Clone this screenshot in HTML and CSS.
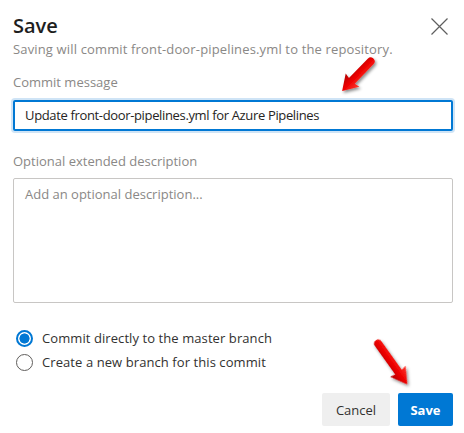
FILE: index.html
```html
<!DOCTYPE html>
<html>
<head>
<meta charset="utf-8">
<link rel="stylesheet" href="styles.css">
</head>
<body>
<div class="dialog">
  <div class="header">
    <div class="titles">
      <div class="title">Save</div>
      <div class="subtitle">Saving will commit front-door-pipelines.yml to the repository.</div>
    </div>
    <button class="close" aria-label="Close">
      <svg width="17" height="17" viewBox="0 0 17 17"><path d="M0.5 0.5 L16.5 16.5 M16.5 0.5 L0.5 16.5" stroke="#5f5f5f" stroke-width="1.2" fill="none"/></svg>
    </button>
  </div>

  <div class="label label-first">Commit message</div>
  <div class="input">Update front-door-pipelines.yml for Azure Pipelines</div>

  <div class="label label-second">Optional extended description</div>
  <div class="textarea">Add an optional description...</div>

  <div class="radios">
    <div class="radio-row"><span class="radio checked"></span><span class="radio-label">Commit directly to the master branch</span></div>
    <div class="radio-row"><span class="radio"></span><span class="radio-label">Create a new branch for this commit</span></div>
  </div>

  <div class="actions">
    <button class="btn btn-cancel">Cancel</button>
    <button class="btn btn-save">Save</button>
  </div>
</div>

<svg class="annotations" width="464" height="433" viewBox="0 0 464 433">
  <defs>
    <linearGradient id="redg" x1="0" y1="0" x2="0" y2="1">
      <stop offset="0" stop-color="#ff3b30"/>
      <stop offset="0.5" stop-color="#ee0000"/>
      <stop offset="1" stop-color="#b00000"/>
    </linearGradient>
    <filter id="shadow" x="-30%" y="-30%" width="160%" height="160%">
      <feDropShadow dx="1.5" dy="2" stdDeviation="1.5" flood-color="#000" flood-opacity="0.45"/>
    </filter>
  </defs>
  <g filter="url(#shadow)">
    <g transform="translate(372 60) rotate(134)">
      <path d="M2 -4 L29 -4 L28 -9.5 L43 0 L28 9.5 L29 4 L2 4 A4 4 0 0 1 2 -4 Z" fill="url(#redg)"/>
    </g>
    <g transform="translate(377 342) rotate(54.5)">
      <path d="M2 -4 L37 -4 L36 -9.5 L52 0 L36 9.5 L37 4 L2 4 A4 4 0 0 1 2 -4 Z" fill="url(#redg)"/>
    </g>
  </g>
</svg>
</body>
</html>
```

FILE: styles.css
```css
* { box-sizing: border-box; }
html, body { margin: 0; padding: 0; background: #fff; }
body {
  font-family: "Open Sans", "Noto Sans", sans-serif;
  color: #323130;
  width: 464px;
  height: 433px;
  overflow: hidden;
  position: relative;
}
.dialog {
  padding: 12px 11px 0 13px;
  display: flex;
  flex-direction: column;
}
.header {
  display: flex;
  justify-content: space-between;
  align-items: flex-start;
}
.title {
  font-size: 20px;
  line-height: 28px;
  font-weight: 600;
  color: #1e1e1e;
}
.subtitle {
  font-size: 13px;
  line-height: 18px;
  letter-spacing: 0.15px;
  color: #8a8886;
}
.close {
  border: none;
  background: transparent;
  padding: 0;
  margin: 6px 5px 0 0;
  width: 17px;
  height: 17px;
  display: flex;
}
.label {
  font-size: 13px;
  line-height: 20px;
  color: #8a8886;
}
.label-first { margin-top: 14px; }
.label-second { margin-top: 20px; }
.input {
  margin-top: 8px;
  height: 31px;
  border: 2px solid #0078d4;
  border-radius: 2px;
  box-shadow: 0 0 0 2px #cfe4f6;
  padding: 0 10px;
  font-size: 13px;
  letter-spacing: -0.35px;
  line-height: 27px;
  color: #252423;
}
.textarea {
  margin-top: 7px;
  height: 125px;
  border: 1px solid #c8c6c4;
  border-radius: 2px;
  padding: 6px 11px;
  font-size: 13px;
  line-height: 18px;
  color: #8a8886;
}
.radios {
  margin-top: 23px;
  display: flex;
  flex-direction: column;
}
.radio-row {
  height: 24px;
  display: flex;
  align-items: center;
}
.radio {
  width: 17px;
  height: 17px;
  border-radius: 50%;
  border: 1px solid #605e5c;
  margin-left: 3px;
  margin-right: 9px;
  flex: none;
}
.radio.checked {
  border: 2px solid #0078d4;
  background: radial-gradient(circle, #0078d4 0 4.8px, #fff 5.3px);
}
.radio-label {
  font-size: 13px;
  letter-spacing: 0.08px;
  color: #323130;
}
.actions {
  margin-top: 19px;
  display: flex;
  justify-content: flex-end;
  gap: 8px;
}
.btn {
  height: 33px;
  border: none;
  border-radius: 2px;
  font-family: "Open Sans", "Noto Sans", sans-serif;
  font-size: 13px;
  padding: 0;
}
.btn-cancel {
  width: 68px;
  background: #efefef;
  color: #323130;
}
.btn-save {
  width: 55px;
  background: #0078d4;
  color: #fff;
  font-weight: 700;
}
.annotations {
  position: absolute;
  left: 0;
  top: 0;
  pointer-events: none;
}
```
